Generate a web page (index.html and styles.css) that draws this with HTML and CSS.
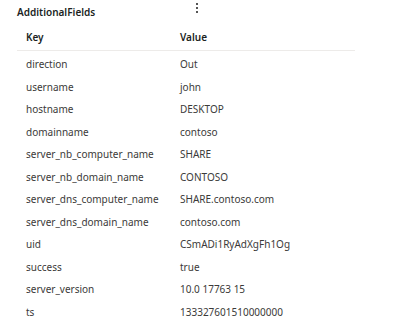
FILE: index.html
```html
<!DOCTYPE html>
<html lang="en">
<head>
    <meta charset="UTF-8">
    <title>AdditionalFields</title>
    <link rel="stylesheet" href="styles.css">
</head>
<body>
    <div class="panel">
        <div class="panel-head">
            <span class="title">AdditionalFields</span>
            <span class="kebab"><i></i><i></i><i></i></span>
        </div>
        <div class="fields">
            <div class="row head"><div class="cell">Key</div><div class="cell">Value</div></div>
            <div class="row"><div class="cell">direction</div><div class="cell">Out</div></div>
            <div class="row"><div class="cell">username</div><div class="cell">john</div></div>
            <div class="row"><div class="cell">hostname</div><div class="cell">DESKTOP</div></div>
            <div class="row"><div class="cell">domainname</div><div class="cell">contoso</div></div>
            <div class="row"><div class="cell">server_nb_computer_name</div><div class="cell">SHARE</div></div>
            <div class="row"><div class="cell">server_nb_domain_name</div><div class="cell">CONTOSO</div></div>
            <div class="row"><div class="cell">server_dns_computer_name</div><div class="cell">SHARE.contoso.com</div></div>
            <div class="row"><div class="cell">server_dns_domain_name</div><div class="cell">contoso.com</div></div>
            <div class="row"><div class="cell">uid</div><div class="cell">CSmADi1RyAdXgFh1Og</div></div>
            <div class="row"><div class="cell">success</div><div class="cell">true</div></div>
            <div class="row"><div class="cell">server_version</div><div class="cell">10.0 17763 15</div></div>
            <div class="row"><div class="cell">ts</div><div class="cell">133327601510000000</div></div>
        </div>
        <div class="more">Show less</div>
    </div>
</body>
</html>
```

FILE: styles.css
```css
body {
    margin: 0;
    background-color: #ffffff;
    font-family: "Noto Sans", "Open Sans", sans-serif;
    color: #3b3a39;
    overflow: hidden;
    height: 330px;
}
.panel {
    padding-left: 17px;
    width: 338px;
}
.panel-head {
    height: 24px;
    display: flex;
    align-items: center;
    position: relative;
}
.title {
    font-size: 10px;
    font-weight: 600;
    color: #201f1e;
}
.kebab {
    position: absolute;
    left: 179px;
    top: 3px;
    display: flex;
    flex-direction: column;
    gap: 2px;
}
.kebab i {
    width: 2px;
    height: 2px;
    background-color: #555;
}
.fields {
    font-size: 10px;
}
.row {
    display: grid;
    grid-template-columns: 154px 1fr;
    height: 22.5px;
    align-items: center;
}
.row.head {
    height: 26px;
    font-weight: 600;
    color: #201f1e;
    border-bottom: 1px solid #edebe9;
    margin-bottom: 2px;
}
.cell {
    padding-left: 9px;
    white-space: nowrap;
}
.more {
    width: 318px;
    text-align: center;
    color: #2b88d8;
    font-size: 10px;
    margin-top: 6px;
}
```
